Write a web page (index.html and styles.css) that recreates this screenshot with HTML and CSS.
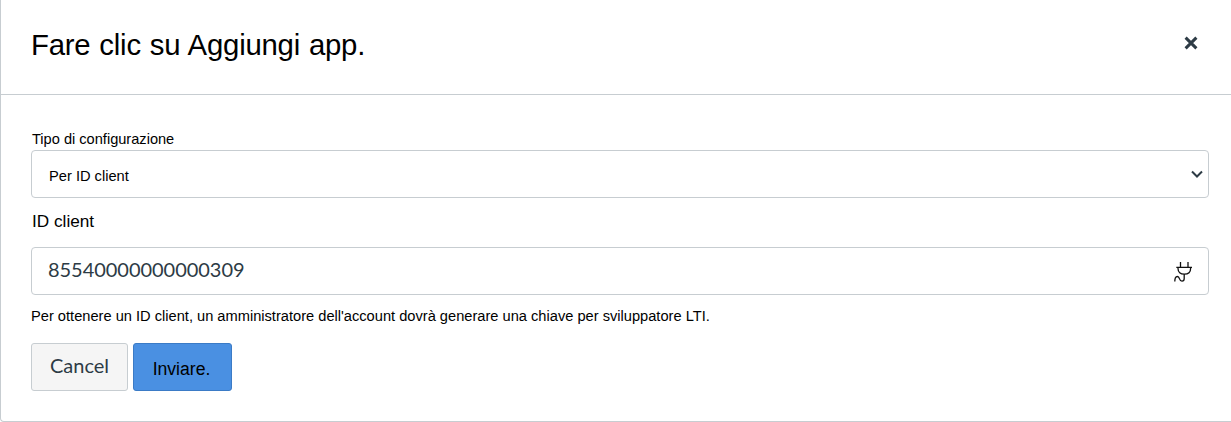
FILE: index.html
```html
<!DOCTYPE html>
<html lang="it">
<head>
<meta charset="utf-8">
<title>Aggiungi app</title>
<link rel="stylesheet" href="styles.css">
</head>
<body>
<main class="dialog">
  <header class="dialog-header">
    <h1 class="dialog-title">Fare clic su Aggiungi app.</h1>
    <button class="close" type="button" aria-label="Chiudi">
      <svg width="14" height="14" viewBox="0 0 14 14"><path d="M1.6 1.6 12.4 12.4M12.4 1.6 1.6 12.4"/></svg>
    </button>
  </header>
  <form class="dialog-body">
    <div class="label type-label">Tipo di configurazione</div>
    <div class="field select">
      <span class="select-value">Per ID client</span>
      <svg class="chevron" width="12" height="8" viewBox="0 0 12 8"><path d="M1 1.500 6 6.500 11 1.500"/></svg>
    </div>
    <div class="label id-label">ID client</div>
    <div class="field input">
      <span class="input-value">85540000000000309</span>
      <svg class="plug" width="20" height="22" viewBox="0 0 20 22"><path d="M8.500 2v5M16 2v5M4.300 7.300H20M6 7.300v1.200c0 3.500 2.400 5.700 6.300 5.700s6.300-2.200 6.300-5.700V7.300M12.200 14.200v4.300c0 1.700-.8 2.600-2.200 2.600-3.500 0-1.700-4.600-4.600-4.600-1.900 0-2.600 1.600-2.600 5"/></svg>
    </div>
    <p class="hint">Per ottenere un ID client, un amministratore dell'account dovrà generare una chiave per sviluppatore LTI.</p>
    <div class="actions">
      <button class="btn cancel" type="button">Cancel</button>
      <button class="btn submit" type="button">Inviare.</button>
    </div>
  </form>
</main>
</body>
</html>
```
FILE: styles.css
```css
* { box-sizing: border-box; }
body {
  margin: 0;
  background: #fff;
  color: #000;
  font-family: "Liberation Sans", Arial, sans-serif;
  overflow: hidden;
}
.dialog {
  height: 422px;
  border-left: 1px solid #c7cdd1;
  border-bottom: 1px solid #c7cdd1;
  border-bottom-left-radius: 4px;
}
.dialog-header {
  display: flex;
  justify-content: space-between;
  align-items: flex-start;
  height: 95px;
  padding: 28px 33px 0 30px;
  border-bottom: 1px solid #c7cdd1;
}
.dialog-title {
  margin: 0;
  font-size: 29.33px;
  font-weight: 400;
  line-height: 34px;
  letter-spacing: -0.22px;
  word-spacing: 1px;
}
.close {
  display: flex;
  margin: 8px 0 0;
  padding: 0;
  border: 0;
  background: none;
}
.close svg { fill: none; stroke: #2d3b45; stroke-width: 3; }
.dialog-body { padding: 35px 22px 0 30px; }
.label { padding-left: 1px; white-space: nowrap; }
.type-label { height: 20px; font-size: 14.6px; line-height: 18px; }
.id-label { height: 49px; padding-top: 12px; font-size: 17.2px; line-height: 22px; }
.field {
  display: flex;
  align-items: center;
  justify-content: space-between;
  height: 48px;
  border: 1px solid #c7cdd1;
  border-radius: 4px;
}
.select { padding: 0 5px 0 17px; }
.select-value { padding-top: 3px; font-size: 14.67px; }
.chevron { fill: none; stroke: #2d3b45; stroke-width: 2; }
.input { padding: 0 16px; }
.input-value {
  padding-bottom: 5px;
  color: #2d3b45;
  font: 20px/24px Lato, sans-serif;
  letter-spacing: -0.04px;
}
.plug { fill: none; stroke: #111; stroke-width: 1.3; }
.hint {
  height: 48px;
  margin: 0;
  padding-top: 12px;
  font-size: 14.65px;
  line-height: 18px;
}
.actions { display: flex; gap: 5px; }
.btn {
  height: 48px;
  padding: 0;
  border: 1px solid #c7cdd1;
  border-radius: 3px;
}
.cancel {
  width: 97px;
  padding-bottom: 4px;
  background: #f5f5f5;
  color: #2d3b45;
  font: 20px/24px Lato, sans-serif;
}
.submit {
  width: 99px;
  padding: 4px 2px 0 0;
  border-color: #3b7bc6;
  background: #4a90e2;
  color: #000;
  font: 17.6px/22px "Liberation Sans", Arial, sans-serif;
}
```
